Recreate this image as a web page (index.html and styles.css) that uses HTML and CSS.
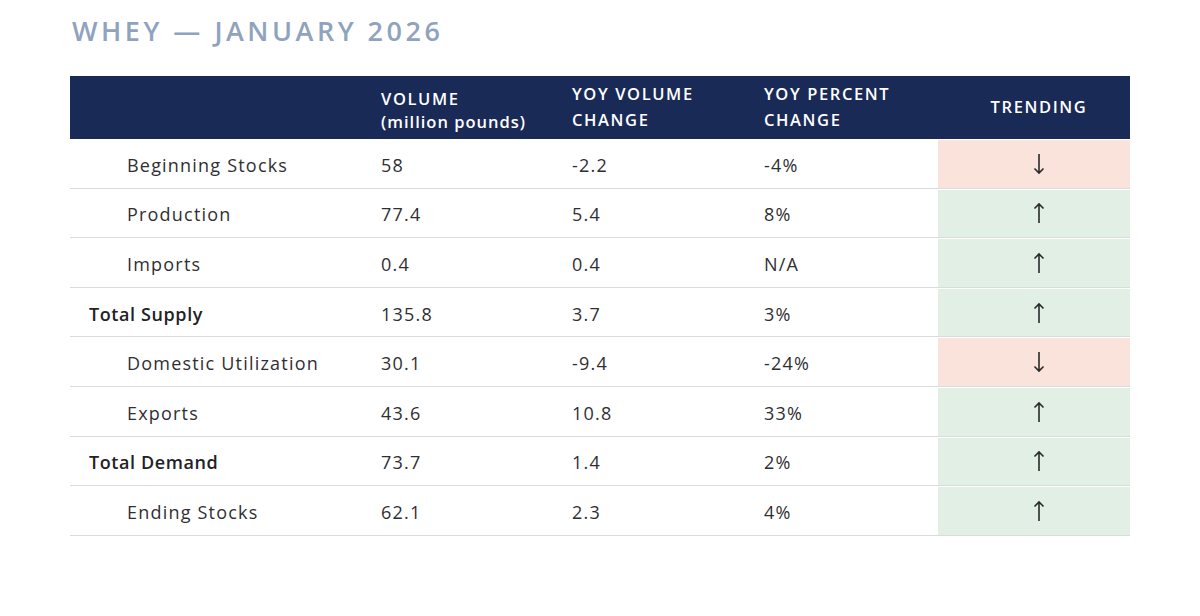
FILE: index.html
```html
<!DOCTYPE html>
<html lang="en">
<head>
<meta charset="utf-8">
<title>Whey — January 2026</title>
<link rel="stylesheet" href="styles.css">
</head>
<body>
<div class="page">
  <h1 class="title">WHEY — JANUARY 2026</h1>
  <div class="table">
    <div class="row head">
      <div class="cell"></div>
      <div class="cell h-vol"><div><div class="hl">VOLUME</div><div class="hl lc">(million pounds)</div></div></div>
      <div class="cell h-two"><div><div class="hl2">YOY VOLUME</div><div class="hl2">CHANGE</div></div></div>
      <div class="cell h-two"><div><div class="hl2">YOY PERCENT</div><div class="hl2">CHANGE</div></div></div>
      <div class="cell h-trend">TRENDING</div>
    </div>
    <div class="row">
      <div class="cell label sub">Beginning Stocks</div>
      <div class="cell">58</div><div class="cell">-2.2</div><div class="cell">-4%</div>
      <div class="cell trend down"><svg viewBox="0 0 12 22" class="arr"><path d="M6 1V20M1.5 15.5L6 20l4.5-4.5"/></svg></div>
    </div>
    <div class="row">
      <div class="cell label sub">Production</div>
      <div class="cell">77.4</div><div class="cell">5.4</div><div class="cell">8%</div>
      <div class="cell trend up"><svg viewBox="0 0 12 22" class="arr"><path d="M6 21V2M1.5 6.5L6 2l4.5 4.5"/></svg></div>
    </div>
    <div class="row">
      <div class="cell label sub">Imports</div>
      <div class="cell">0.4</div><div class="cell">0.4</div><div class="cell">N/A</div>
      <div class="cell trend up"><svg viewBox="0 0 12 22" class="arr"><path d="M6 21V2M1.5 6.5L6 2l4.5 4.5"/></svg></div>
    </div>
    <div class="row">
      <div class="cell label total">Total Supply</div>
      <div class="cell">135.8</div><div class="cell">3.7</div><div class="cell">3%</div>
      <div class="cell trend up"><svg viewBox="0 0 12 22" class="arr"><path d="M6 21V2M1.5 6.5L6 2l4.5 4.5"/></svg></div>
    </div>
    <div class="row">
      <div class="cell label sub">Domestic Utilization</div>
      <div class="cell">30.1</div><div class="cell">-9.4</div><div class="cell">-24%</div>
      <div class="cell trend down"><svg viewBox="0 0 12 22" class="arr"><path d="M6 1V20M1.5 15.5L6 20l4.5-4.5"/></svg></div>
    </div>
    <div class="row">
      <div class="cell label sub">Exports</div>
      <div class="cell">43.6</div><div class="cell">10.8</div><div class="cell">33%</div>
      <div class="cell trend up"><svg viewBox="0 0 12 22" class="arr"><path d="M6 21V2M1.5 6.5L6 2l4.5 4.5"/></svg></div>
    </div>
    <div class="row">
      <div class="cell label total">Total Demand</div>
      <div class="cell">73.7</div><div class="cell">1.4</div><div class="cell">2%</div>
      <div class="cell trend up"><svg viewBox="0 0 12 22" class="arr"><path d="M6 21V2M1.5 6.5L6 2l4.5 4.5"/></svg></div>
    </div>
    <div class="row">
      <div class="cell label sub">Ending Stocks</div>
      <div class="cell">62.1</div><div class="cell">2.3</div><div class="cell">4%</div>
      <div class="cell trend up"><svg viewBox="0 0 12 22" class="arr"><path d="M6 21V2M1.5 6.5L6 2l4.5 4.5"/></svg></div>
    </div>
  </div>
</div>
</body>
</html>
```
FILE: styles.css
```css
html, body {
  margin: 0;
  padding: 0;
  background: #ffffff;
}
body {
  font-family: "Open Sans", "Liberation Sans", sans-serif;
  color: #2f2f33;
}
.page {
  width: 1200px;
  height: 616px;
  padding: 14px 70px 0 70px;
  box-sizing: border-box;
}
.title {
  margin: 0 0 0 2px;
  font-size: 27px;
  font-weight: 600;
  letter-spacing: 3.5px;
  color: #90a3be;
  line-height: 34px;
}
.table {
  margin-top: 28px;
  width: 1060px;
}
.row {
  display: grid;
  grid-template-columns: 311px 191px 192px 174px 192px;
  height: 49.6px;
  border-bottom: 1px solid #d9dcdf;
  box-sizing: border-box;
  font-size: 18px;
  letter-spacing: 1.2px;
}
.cell {
  display: flex;
  align-items: center;
  padding-top: 3px;
}
.row.head {
  background: #1a2a56;
  height: 63px;
  border-bottom: none;
  color: #ffffff;
  font-weight: 600;
  font-size: 16.5px;
  letter-spacing: 1.6px;
}
.row.head .cell {
  padding-top: 0;
}
.hl {
  line-height: 23px;
}
.hl2 {
  line-height: 26px;
}
.h-vol {
  padding-top: 4px !important;
}
.lc {
  letter-spacing: 1px;
}
.h-two {
  padding-bottom: 2px;
}
.h-trend {
  justify-content: center;
  padding-left: 10px;
  padding-bottom: 2px;
}
.label.sub {
  padding-left: 57px;
}
.label.total {
  padding-left: 19px;
  font-weight: 600;
  color: #222226;
  letter-spacing: 0.6px;
}
.trend {
  justify-content: center;
  margin-top: 1px;
  padding-top: 0;
  padding-left: 10px;
}
.trend.down {
  background: #fae3da;
}
.trend.up {
  background: #e1efe4;
}
.arr {
  width: 12px;
  height: 22px;
  fill: none;
  stroke: #2a2a2a;
  stroke-width: 1.6;
}
```
